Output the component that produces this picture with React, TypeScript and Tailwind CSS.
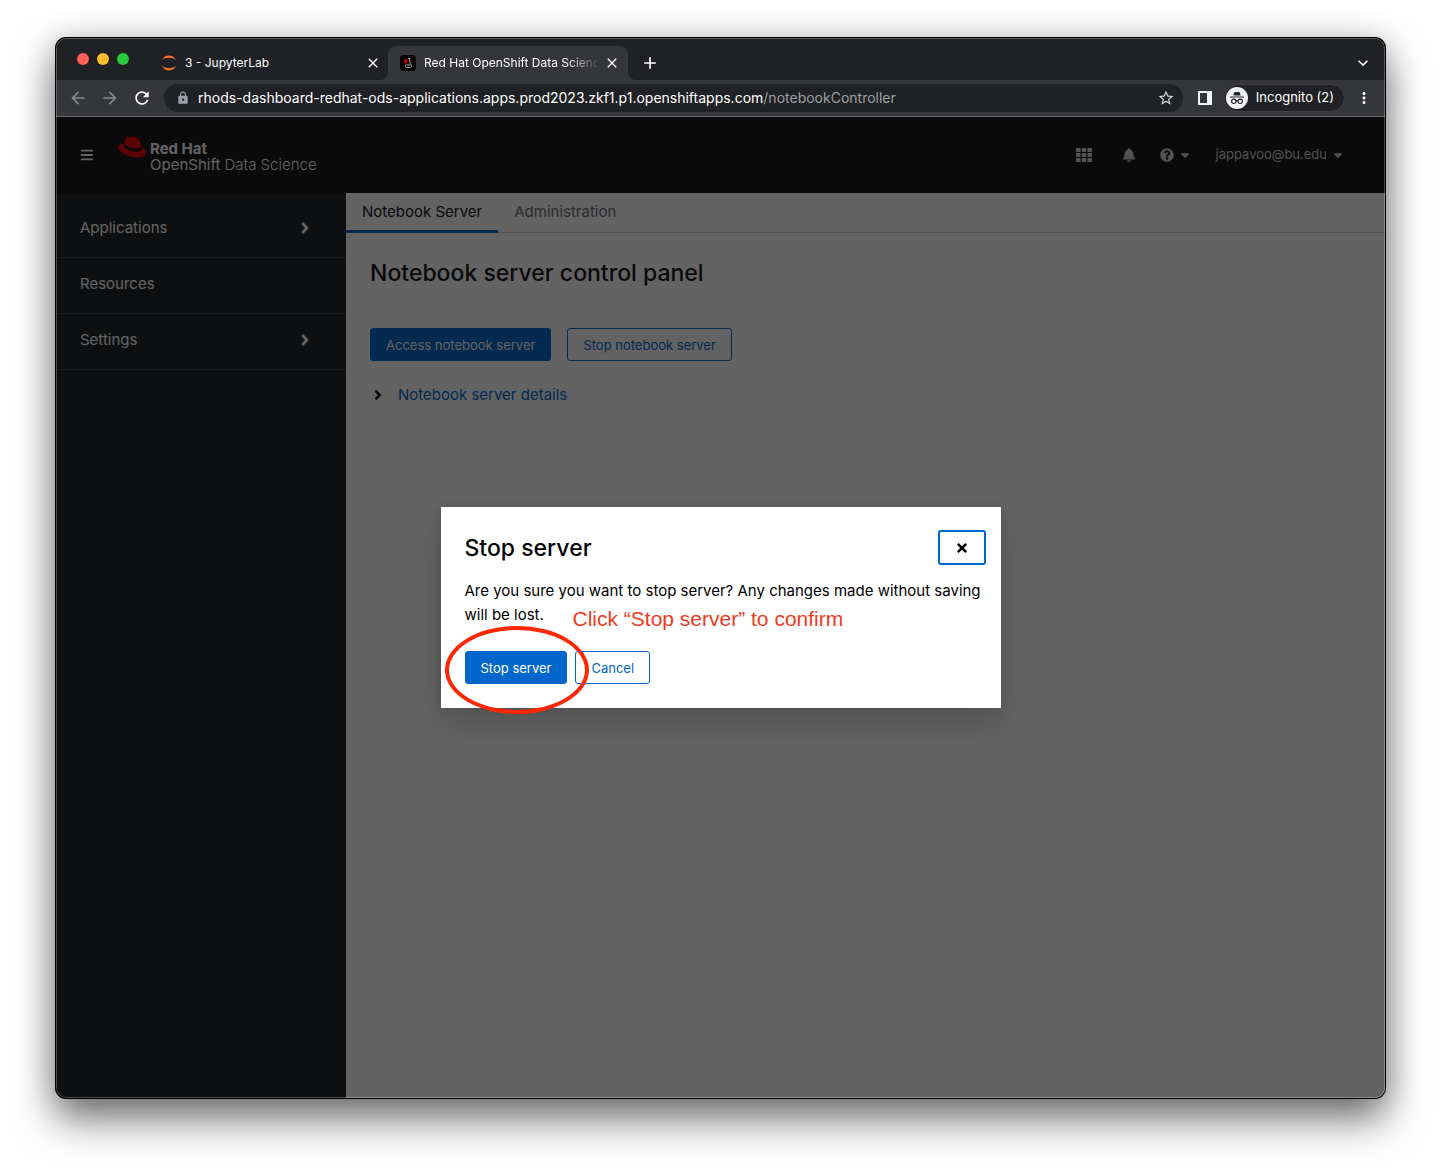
import type { ReactNode } from "react";
import {
  FaAngleRight,
  FaBars,
  FaBell,
  FaCaretDown,
  FaQuestionCircle,
  FaRedhat,
  FaTh,
  FaTimes,
} from "react-icons/fa";
import {
  MdAdd,
  MdArrowBack,
  MdArrowForward,
  MdClose,
  MdKeyboardArrowDown,
  MdLock,
  MdMoreVert,
  MdRefresh,
  MdStarBorder,
} from "react-icons/md";

function JupyterIcon() {
  return (
    <svg viewBox="0 0 16 16" className="size-4 shrink-0" fill="#f37726" aria-hidden="true">
      <path d="M1 5.200C2.200 2.300 4.800.6 8 .6s5.800 1.700 7 4.600C13.400 3.600 11 2.800 8 2.800S2.600 3.600 1 5.200z" />
      <path d="M1 10.800c1.200 2.900 3.800 4.600 7 4.600s5.800-1.700 7-4.600c-1.600 1.600-4 2.400-7 2.400s-5.400-.8-7-2.400z" />
    </svg>
  );
}

function FlaskIcon() {
  return (
    <svg viewBox="0 0 16 16" className="size-4 shrink-0" aria-hidden="true">
      <rect width="16" height="16" rx="3.500" fill="#000" />
      <path d="M3.500 5l1.500-.9 2.300.4v3.300l-1.600.9-2.200-.9.9-1.200z" fill="#c00" />
      <path
        d="M7.600 3.600h2.600M9.700 3.600v3.900l1.700 3c.5 1-.1 1.900-1.100 1.900H6.700c-1.100 0-1.600-.8-1.100-1.800l.8-1.400M7 10h3.300"
        fill="none"
        stroke="#aaa"
        strokeWidth="1"
      />
    </svg>
  );
}

function IncognitoIcon() {
  return (
    <svg viewBox="0 0 22 22" className="size-[22px] shrink-0" aria-hidden="true">
      <circle cx="11" cy="11" r="11" fill="#f1f3f4" />
      <path d="M7.300 8.600l1-3.200c.2-.6.6-.8 1.200-.6l1.500.4 1.500-.4c.6-.2 1 0 1.200.6l1 3.200z" fill="#202124" />
      <path d="M4 9.400h14v1.100H4z" fill="#202124" />
      <g fill="none" stroke="#202124" strokeWidth="1.100">
        <circle cx="7.800" cy="14.300" r="2.200" />
        <circle cx="14.200" cy="14.300" r="2.200" />
        <path d="M10 14c.6-.5 1.400-.5 2 0" />
      </g>
    </svg>
  );
}

function SidePanelIcon() {
  return (
    <svg viewBox="0 0 14 14" className="size-3.5" aria-hidden="true">
      <path d="M0 0h14v14H0zM2 2v10h7V2z" fill="#f1f3f4" fillRule="evenodd" />
    </svg>
  );
}

function TabStrip() {
  return (
    <div className="flex h-[42px] items-end bg-[#202124] text-xs text-white">
      <div className="flex h-[42px] w-[105px] shrink-0 items-center gap-2 pl-[21px]">
        <span className="size-3 rounded-full bg-[#ff5f57]" />
        <span className="size-3 rounded-full bg-[#febc2e]" />
        <span className="size-3 rounded-full bg-[#28c840]" />
      </div>
      <div className="flex h-[34px] w-[227px] items-center gap-2">
        <JupyterIcon />
        <span className="grow">3 - JupyterLab</span>
        <button aria-label="Close JupyterLab tab" className="mr-[7px]">
          <MdClose className="size-4" />
        </button>
      </div>
      <div className="-ml-2 size-2 overflow-hidden bg-[#35363a]">
        <div className="size-2 rounded-br-lg bg-[#202124]" />
      </div>
      <div className="flex h-[34px] w-60 items-center gap-2 rounded-t-lg bg-[#35363a] pr-2 pl-3">
        <FlaskIcon />
        <span className="w-44 overflow-hidden whitespace-nowrap mask-r-from-80%">
          Red Hat OpenShift Data Science
        </span>
        <button aria-label="Close Red Hat tab" className="-ml-1">
          <MdClose className="size-4" />
        </button>
      </div>
      <div className="size-2 bg-[#35363a]">
        <div className="size-2 rounded-bl-lg bg-[#202124]" />
      </div>
      <button aria-label="New tab" className="mb-[7px] ml-1">
        <MdAdd className="size-5" />
      </button>
      <button aria-label="Search tabs" className="mr-3 mb-[7px] ml-auto">
        <MdKeyboardArrowDown className="size-5" />
      </button>
    </div>
  );
}

function Toolbar() {
  return (
    <div className="flex h-[37px] items-center border-b border-[#6b696e] bg-[#35363a] text-white">
      <div className="flex w-[108px] shrink-0 items-center gap-3 pl-3">
        <button aria-label="Back" className="text-[#87888b]">
          <MdArrowBack className="size-5" />
        </button>
        <button aria-label="Forward" className="text-[#87888b]">
          <MdArrowForward className="size-5" />
        </button>
        <button aria-label="Reload">
          <MdRefresh className="size-5" />
        </button>
      </div>
      <div className="flex h-7 grow items-center rounded-full bg-[#202124] pr-2 pl-3">
        <MdLock className="size-3.5 text-[#9aa0a6]" />
        <p className="ml-2 grow text-sm">
          rhods-dashboard-redhat-ods-applications.apps.prod2023.zkf1.p1.openshiftapps.com
          <span className="text-[#9aa0a6]">/notebookController</span>
        </p>
        <button aria-label="Bookmark this page" className="text-[#d5d6d8]">
          <MdStarBorder className="size-[18px]" />
        </button>
      </div>
      <button aria-label="Side panel" className="mr-3 ml-[15px]">
        <SidePanelIcon />
      </button>
      <button className="flex h-7 items-center gap-2 rounded-full border border-[#3f3e43] bg-[#202124] pr-2.5 pl-px text-[13px]">
        <IncognitoIcon />
        Incognito (2)
      </button>
      <button aria-label="Menu" className="mr-3 ml-2.5">
        <MdMoreVert className="size-[18px]" />
      </button>
    </div>
  );
}

function Masthead() {
  return (
    <header className="flex h-[76px] items-center bg-[#151515] pr-10 pl-6 text-white">
      <button aria-label="Global navigation">
        <FaBars className="size-3.5" />
      </button>
      <a href="#home" className="ml-6 flex items-start">
        <FaRedhat className="-mt-1 size-7 text-[#e00]" />
        <span className="ml-1 pt-1 text-[15px] leading-4">
          <span className="block font-bold">Red Hat</span>
          OpenShift <span className="font-light">Data Science</span>
        </span>
      </a>
      <div className="ml-auto flex items-center text-[13px] text-[#d2d2d2]">
        <button aria-label="Application launcher">
          <FaTh className="size-4" />
        </button>
        <button aria-label="Notifications" className="ml-[30px]">
          <FaBell className="size-3.5" />
        </button>
        <button aria-label="Help" className="ml-6 flex items-center gap-1">
          <FaQuestionCircle className="size-3.5" />
          <FaCaretDown className="size-3.5" />
        </button>
        <button className="ml-6 flex items-center gap-1">
          jappavoo@bu.edu
          <FaCaretDown className="size-3.5" />
        </button>
      </div>
    </header>
  );
}

function NavItem({ label, expandable = false }: { label: string; expandable?: boolean }) {
  return (
    <li className="border-b border-[#3c3f42]">
      <a href="#nav" className="flex h-[55px] items-center justify-between pr-8 pb-1 pl-6">
        {label}
        {expandable && <FaAngleRight className="size-[18px]" />}
      </a>
    </li>
  );
}

function Sidebar() {
  return (
    <nav className="w-[290px] shrink-0 bg-[#212427] pt-[9px] text-[15px] leading-6 text-white">
      <ul>
        <NavItem label="Applications" expandable />
        <NavItem label="Resources" />
        <NavItem label="Settings" expandable />
      </ul>
    </nav>
  );
}

function Button({ primary = false, children }: { primary?: boolean; children: ReactNode }) {
  const look = primary ? "border-[#0066cc] bg-[#0066cc] text-white" : "border-[#0066cc] text-[#0066cc]";
  return (
    <button className={`h-[33px] rounded-[3px] border px-[15px] text-[13px] leading-5 whitespace-nowrap ${look}`}>
      {children}
    </button>
  );
}

function NotebookPanel() {
  return (
    <main className="min-w-0 grow bg-white text-[15px] leading-6 text-[#151515]">
      <div className="flex h-10 border-b border-[#d2d2d2]" role="tablist">
        <button role="tab" aria-selected="true" className="h-10 border-b-3 border-[#0066cc] px-4">
          Notebook Server
        </button>
        <button role="tab" aria-selected="false" className="h-10 border-b-3 border-transparent px-4 text-[#6a6e73]">
          Administration
        </button>
      </div>
      <section className="px-6 pt-6">
        <h1 className="text-[23px] leading-8 font-medium">Notebook server control panel</h1>
        <div className="mt-[39px] flex gap-4">
          <Button primary>Access notebook server</Button>
          <Button>Stop notebook server</Button>
        </div>
        <button className="mt-[22px] flex items-center text-[#0066cc]">
          <FaAngleRight className="mr-3 size-4 text-[#151515]" />
          Notebook server details
        </button>
      </section>
    </main>
  );
}

function StopServerDialog() {
  return (
    <div className="absolute inset-0 flex items-center justify-center bg-[#030303]/62">
      <div
        role="dialog"
        aria-labelledby="stop-title"
        className="relative w-[560px] bg-white pt-[23px] pr-[15px] pb-6 pl-6 text-black shadow-[0_16px_32px_rgba(3,3,3,0.16),0_0_8px_rgba(3,3,3,0.1)]"
      >
        <div className="flex items-center justify-between">
          <h2 id="stop-title" className="text-[23px] leading-8 font-medium">
            Stop server
          </h2>
          <button
            aria-label="Close"
            className="flex h-[35px] w-12 items-center justify-center rounded-[3px] border-2 border-[#0066cc]"
          >
            <FaTimes className="size-3.5" />
          </button>
        </div>
        <p className="mt-[14px] text-[15px] leading-6">
          Are you sure you want to stop server? Any changes made without saving will be lost.
        </p>
        <div className="mt-6 flex gap-2">
          <Button primary>Stop server</Button>
          <Button>Cancel</Button>
        </div>
        <p className="absolute top-[100px] left-[132px] font-['Liberation_Sans',Arial,sans-serif] text-[21px] leading-6 whitespace-nowrap text-[#f03a1d]">
          Click “Stop server” to confirm
        </p>
        <span className="pointer-events-none absolute -bottom-1.5 left-1 h-[88px] w-36 rounded-[50%] border-4 border-[#ff2600]" />
      </div>
    </div>
  );
}

export default function App() {
  return (
    <div className="flex min-h-screen bg-white px-[55px] pt-[37px] pb-[73px] font-['Inter',sans-serif]">
      <div className="flex min-w-0 grow rounded-[11px] bg-black p-px shadow-[0_20px_40px_rgba(0,0,0,0.55),0_0_30px_rgba(0,0,0,0.15)]">
        <div className="relative flex min-w-0 grow flex-col overflow-hidden rounded-[10px] after:pointer-events-none after:absolute after:inset-0 after:rounded-[10px] after:border after:border-white/25">
          <TabStrip />
          <Toolbar />
          <div className="relative flex grow flex-col">
            <Masthead />
            <div className="flex grow">
              <Sidebar />
              <NotebookPanel />
            </div>
            <StopServerDialog />
          </div>
        </div>
      </div>
    </div>
  );
}
